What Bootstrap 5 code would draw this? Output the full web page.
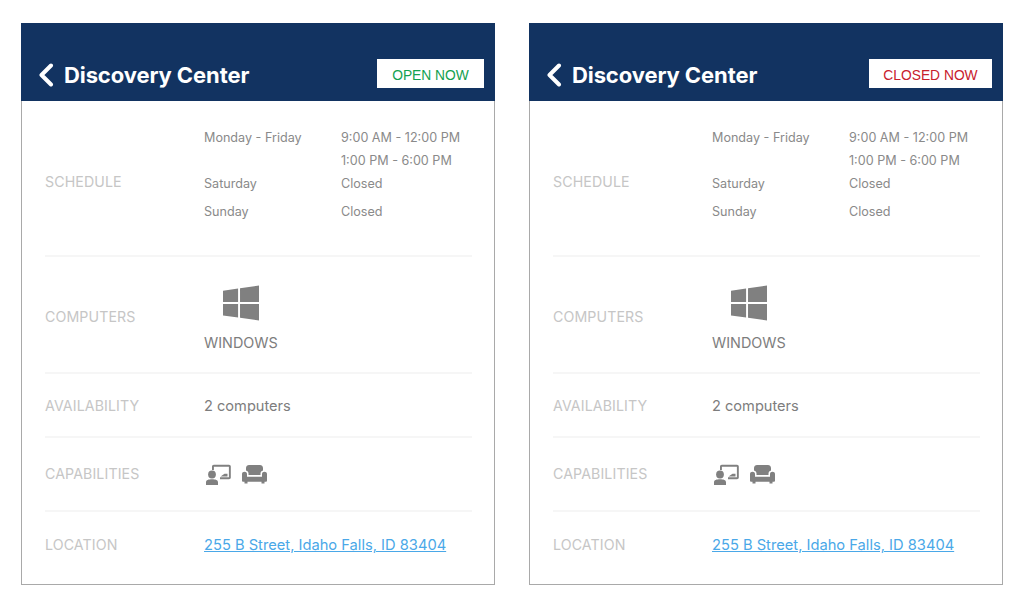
<!DOCTYPE html>
<html lang="en">
<head>
    <meta charset="UTF-8">
    <meta name="viewport" content="width=device-width, initial-scale=1.0">
    <title>Discovery Center</title>
    <link href="https://cdn.jsdelivr.net/npm/bootstrap@5.3.0/dist/css/bootstrap.min.css" rel="stylesheet">
    <style>
        body {
            background-color: #fff;
            font-family: Inter, "Liberation Sans", sans-serif;
            padding: 23px 21px 0;
        }

        .panels { gap: 34px; }

        .panel {
            width: 474px;
            height: 562px;
            border: 1px solid #a9a9a9;
            border-top: 0;
            flex: none;
        }

        .panel-head {
            height: 78px;
            margin: 0 -1px;
            background-color: #123361;
            padding: 36px 11px 0 17px;
        }

        .panel-title-wrap { margin-top: 1px; }

        .panel-title {
            font-size: 22px;
            font-weight: 700;
            line-height: 30px;
            color: #fff;
            margin: 0;
            letter-spacing: -.1px;
        }

        .back-icon { width: 16px; height: 24px; margin-right: 10px; }

        .status-box {
            width: 107px;
            height: 29px;
            font-family: "Liberation Sans", sans-serif;
            font-size: 13.8px;
            line-height: 33px;
            text-align: center;
            background-color: #fff;
        }

        .status-box.wide { width: 123px; }
        .status-open { color: #12a150; }
        .status-closed { color: #c8202c; }

        .info-row {
            margin: 0 22px 0 23px;
            border-bottom: 2px solid #f6f6f6;
        }

        .info-row:last-child { border-bottom: 0; }

        .row-schedule { height: 156px; }
        .row-computers { height: 117px; }
        .row-availability { height: 64px; }
        .row-capabilities { height: 74px; }
        .row-location { height: 71px; padding-bottom: 6px; }

        .info-label {
            width: 159px;
            flex: none;
            font-size: 14.2px;
            letter-spacing: .1px;
            color: #c6c6c6;
        }

        .row-schedule .info-label { margin-top: 8px; }
        .row-computers .info-label { margin-top: 4px; }
        .row-availability .info-label { margin-top: 2px; }

        .info-value {
            margin-top: 4px;
            font-size: 14.6px;
            color: #7d7d7d;
        }

        .sched-grid {
            display: grid;
            grid-template-columns: 137px auto;
            font-size: 12.6px;
            color: #8a8a8a;
            line-height: 23px;
            padding-bottom: 8px;
        }

        .sched-grid .gap-top { margin-top: 5px; }

        .win-block { padding-top: 9px; }
        .win-icon { width: 36px; height: 36px; display: block; margin-left: 19px; }
        .win-label { margin-top: 12px; font-size: 14.4px; color: #7d7d7d; line-height: 20px; }

        .cap-icons { gap: 11px; margin-left: 2px; }
        .cap-icon { height: 21px; display: block; }

        .loc-link { margin-top: 2px; color: #4aa8e8; font-size: 14.7px; }
    </style>
</head>

<body>
    <div class="d-flex panels">
        <div class="panel">
            <div class="panel-head d-flex justify-content-between align-items-start">
                <div class="d-flex align-items-center panel-title-wrap">
                    <svg class="back-icon" viewBox="0 0 16 24"><path d="M13 2.5 3.5 12 13 21.5" fill="none" stroke="#fff" stroke-width="4" stroke-linecap="round" stroke-linejoin="round"/></svg>
                    <h1 class="panel-title">Discovery Center</h1>
                </div>
                <div class="status-box status-open">OPEN NOW</div>
            </div>
            <div class="info-row row-schedule d-flex align-items-center">
                <div class="info-label">SCHEDULE</div>
                <div class="sched-grid">
                    <div>Monday - Friday</div><div>9:00 AM - 12:00 PM</div>
                    <div></div><div>1:00 PM - 6:00 PM</div>
                    <div>Saturday</div><div>Closed</div>
                    <div class="gap-top">Sunday</div><div class="gap-top">Closed</div>
                </div>
            </div>
            <div class="info-row row-computers d-flex align-items-center">
                <div class="info-label">COMPUTERS</div>
                <div class="win-block">
                    <svg class="win-icon" viewBox="0 0 37 36"><path d="M0 5.5 15.5 3.2V17H0ZM17.5 2.900 37 0V17H17.500ZM0 19H15.500V33L0 30.800ZM17.500 19H37V36L17.500 33.200Z" fill="#808080"/></svg>
                    <div class="win-label">WINDOWS</div>
                </div>
            </div>
            <div class="info-row row-availability d-flex align-items-center">
                <div class="info-label">AVAILABILITY</div>
                <div class="info-value">2 computers</div>
            </div>
            <div class="info-row row-capabilities d-flex align-items-center">
                <div class="info-label">CAPABILITIES</div>
                <div class="d-flex cap-icons">
                    <svg class="cap-icon" viewBox="0 0 25 21" width="25"><path d="M6 6V2.500C6 1.500 6.800.8 7.800.8H23C24 .8 24.800 1.500 24.800 2.500V13.500C24.800 14.500 24 15.200 23 15.200H14V13.300H22.900V2.700H7.900V6Z" fill="#808080"/><circle cx="6" cy="10.500" r="3.900" fill="#808080"/><path d="M0 21V18.200C0 16 2.600 15.200 6 15.200S12 16 12 18.200V21ZM14.500 12.500 18.500 9.800H21.500V12.500Z" fill="#808080"/></svg>
                    <svg class="cap-icon" viewBox="0 0 25 21" width="25"><path d="M4 4C4 2 5.500 1 7 1H18C19.500 1 21 2 21 4V6.500C19.500 6.800 18.500 8 18.500 9.500V11H6.500V9.500C6.500 8 5.500 6.800 4 6.500ZM0 10C0 8.500 1.200 7.800 2.500 7.800S5 8.500 5 10V12.800H20V10C20 8.500 21.200 7.800 22.500 7.800S25 8.500 25 10V16.500C25 17.300 24.500 17.800 23.700 17.800H22.500V19.500H19.500V17.800H5.500V19.500H2.500V17.800H1.300C.5 17.800 0 17.300 0 16.500Z" fill="#808080"/></svg>
                </div>
            </div>
            <div class="info-row row-location d-flex align-items-center">
                <div class="info-label">LOCATION</div>
                <a class="loc-link" href="#">255 B Street, Idaho Falls, ID 83404</a>
            </div>
        </div>

        <div class="panel">
            <div class="panel-head d-flex justify-content-between align-items-start">
                <div class="d-flex align-items-center panel-title-wrap">
                    <svg class="back-icon" viewBox="0 0 16 24"><path d="M13 2.5 3.5 12 13 21.5" fill="none" stroke="#fff" stroke-width="4" stroke-linecap="round" stroke-linejoin="round"/></svg>
                    <h1 class="panel-title">Discovery Center</h1>
                </div>
                <div class="status-box wide status-closed">CLOSED NOW</div>
            </div>
            <div class="info-row row-schedule d-flex align-items-center">
                <div class="info-label">SCHEDULE</div>
                <div class="sched-grid">
                    <div>Monday - Friday</div><div>9:00 AM - 12:00 PM</div>
                    <div></div><div>1:00 PM - 6:00 PM</div>
                    <div>Saturday</div><div>Closed</div>
                    <div class="gap-top">Sunday</div><div class="gap-top">Closed</div>
                </div>
            </div>
            <div class="info-row row-computers d-flex align-items-center">
                <div class="info-label">COMPUTERS</div>
                <div class="win-block">
                    <svg class="win-icon" viewBox="0 0 37 36"><path d="M0 5.5 15.5 3.2V17H0ZM17.5 2.900 37 0V17H17.500ZM0 19H15.500V33L0 30.800ZM17.500 19H37V36L17.500 33.200Z" fill="#808080"/></svg>
                    <div class="win-label">WINDOWS</div>
                </div>
            </div>
            <div class="info-row row-availability d-flex align-items-center">
                <div class="info-label">AVAILABILITY</div>
                <div class="info-value">2 computers</div>
            </div>
            <div class="info-row row-capabilities d-flex align-items-center">
                <div class="info-label">CAPABILITIES</div>
                <div class="d-flex cap-icons">
                    <svg class="cap-icon" viewBox="0 0 25 21" width="25"><path d="M6 6V2.500C6 1.500 6.800.8 7.800.8H23C24 .8 24.800 1.500 24.800 2.500V13.500C24.800 14.500 24 15.200 23 15.200H14V13.300H22.900V2.700H7.900V6Z" fill="#808080"/><circle cx="6" cy="10.500" r="3.900" fill="#808080"/><path d="M0 21V18.200C0 16 2.600 15.200 6 15.200S12 16 12 18.200V21ZM14.500 12.500 18.500 9.800H21.500V12.500Z" fill="#808080"/></svg>
                    <svg class="cap-icon" viewBox="0 0 25 21" width="25"><path d="M4 4C4 2 5.500 1 7 1H18C19.500 1 21 2 21 4V6.500C19.500 6.800 18.500 8 18.500 9.500V11H6.500V9.500C6.500 8 5.500 6.800 4 6.500ZM0 10C0 8.500 1.200 7.800 2.500 7.800S5 8.500 5 10V12.800H20V10C20 8.500 21.200 7.800 22.500 7.800S25 8.500 25 10V16.500C25 17.300 24.500 17.800 23.700 17.800H22.500V19.500H19.500V17.800H5.500V19.500H2.500V17.800H1.300C.5 17.800 0 17.300 0 16.500Z" fill="#808080"/></svg>
                </div>
            </div>
            <div class="info-row row-location d-flex align-items-center">
                <div class="info-label">LOCATION</div>
                <a class="loc-link" href="#">255 B Street, Idaho Falls, ID 83404</a>
            </div>
        </div>
    </div>
    <script src="https://cdn.jsdelivr.net/npm/bootstrap@5.3.0/dist/js/bootstrap.bundle.min.js"></script>
</body>
</html>
